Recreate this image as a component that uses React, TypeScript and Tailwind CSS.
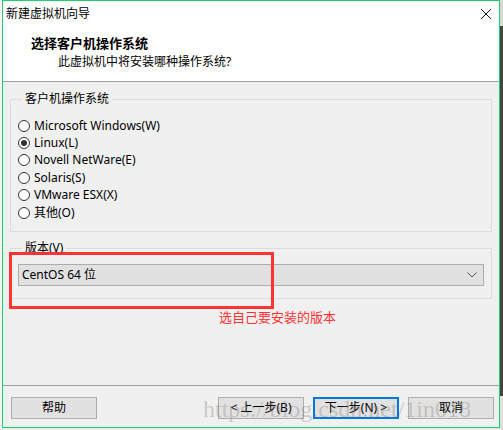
import React from 'react';

const uiFont = { fontFamily: '"Noto Sans", "Noto Sans CJK SC", sans-serif' };

const osOptions = [
  { label: 'Microsoft Windows(W)', checked: false },
  { label: 'Linux(L)', checked: true },
  { label: 'Novell NetWare(E)', checked: false },
  { label: 'Solaris(S)', checked: false },
  { label: 'VMware ESX(X)', checked: false },
  { label: '其他(O)', checked: false },
];

function Radio({ label, checked }: { label: string; checked: boolean }) {
  return (
    <div className="flex items-center h-[17.4px]">
      <span className="w-[12px] h-[12px] rounded-full border border-[#333] bg-white flex items-center justify-center">
        {checked && <span className="w-[6px] h-[6px] rounded-full bg-[#333]" />}
      </span>
      <span className="ml-[4px] text-[12px] leading-none text-black">{label}</span>
    </div>
  );
}

function WinButton({ children, focused = false }: { children: React.ReactNode; focused?: boolean }) {
  return (
    <div
      className={
        focused
          ? 'w-[86px] h-[22px] border-2 border-[#0078d7] bg-[#e1e1e1] flex items-center justify-center text-[12px] text-black'
          : 'w-[86px] h-[22px] border border-[#adadad] bg-[#e1e1e1] flex items-center justify-center text-[12px] text-black'
      }
    >
      {children}
    </div>
  );
}

export default function App() {
  return (
    <div className="w-[503px] h-[430px] bg-[#ececec] flex relative overflow-hidden" style={uiFont}>
      <div className="w-[2px] bg-[#f5f5f5]" />

      {/* wizard window */}
      <div className="w-[498px] h-[428px] border border-[#1fcf6f] flex flex-col bg-[#f0f0f0] relative">
        <div className="bg-white h-[80px] flex flex-col">
          <div className="h-[26px] flex items-center justify-between pl-[3px] pr-[7px]">
            <span className="text-[12px] text-black">新建虚拟机向导</span>
            <svg width="12" height="12" viewBox="0 0 12 12">
              <path d="M1 1 L11 11 M11 1 L1 11" stroke="#111" strokeWidth="1" />
            </svg>
          </div>
          <div className="pl-[28px] mt-[7px] text-[13px] font-bold text-black leading-[18px]">选择客户机操作系统</div>
          <div className="pl-[55px] mt-[1px] text-[12px] text-black leading-[18px]">此虚拟机中将安装哪种操作系统?</div>
        </div>
        <div className="h-px bg-[#a0a0a0]" />

        <div className="px-[7px] flex flex-col">
          <fieldset className="mt-[9px] border border-[#dcdcdc] pl-[7px] pt-[10px] pb-[10px]">
            <legend className="ml-[4px] px-[3px] text-[12px] leading-[16px] text-black">客户机操作系统</legend>
            {osOptions.map((o) => (
              <Radio key={o.label} label={o.label} checked={o.checked} />
            ))}
          </fieldset>

          <fieldset className="mt-[8px] border border-[#dcdcdc] px-[7px] pt-[8px] pb-[12px]">
            <legend className="ml-[4px] px-[3px] text-[12px] leading-[16px] text-black">版本(V)</legend>
            <div className="h-[22px] border border-[#adadad] bg-[#e1e1e1] flex items-center justify-between pl-[3px] pr-[6px]">
              <span className="text-[12px] text-black">CentOS 64 位</span>
              <svg width="10" height="6" viewBox="0 0 10 6">
                <path d="M0.5 0.5 L5 5 L9.5 0.5" fill="none" stroke="#555" strokeWidth="1" />
              </svg>
            </div>
          </fieldset>
        </div>

        <div className="flex-1" />
        <div className="h-px bg-[#a0a0a0]" />
        <div className="h-[41px] flex items-start pt-[11px] pl-[8px] pr-[5px]">
          <WinButton>帮助</WinButton>
          <div className="flex-1" />
          <div className="flex gap-[9px]">
            <WinButton>&lt; 上一步(B)</WinButton>
            <WinButton focused>下一步(N) &gt;</WinButton>
            <WinButton>取消</WinButton>
          </div>
        </div>

        {/* annotation */}
        <div className="absolute left-[6px] top-[251px] w-[265px] h-[57px] border-[3px] border-[#f33]" />
        <div className="absolute left-[216px] top-[307px] text-[13px] leading-[18px] text-[#f33]">选自己要安装的版本</div>

        {/* blog watermark */}
        <div
          className="absolute left-[200px] top-[395px] text-[24px] leading-[26px] text-[rgba(110,110,110,0.3)] whitespace-nowrap pointer-events-none"
          style={{ fontFamily: '"Liberation Serif", serif' }}
        >
          https://blog.csdn.net/1in018
        </div>
      </div>

      <div className="w-[3px] flex flex-col">
        <div className="h-[26px] bg-[#d8d8d8]" />
        <div className="h-[370px] bg-[#444]" />
        <div className="flex-1 bg-[#e0e0e0]" />
      </div>
    </div>
  );
}
